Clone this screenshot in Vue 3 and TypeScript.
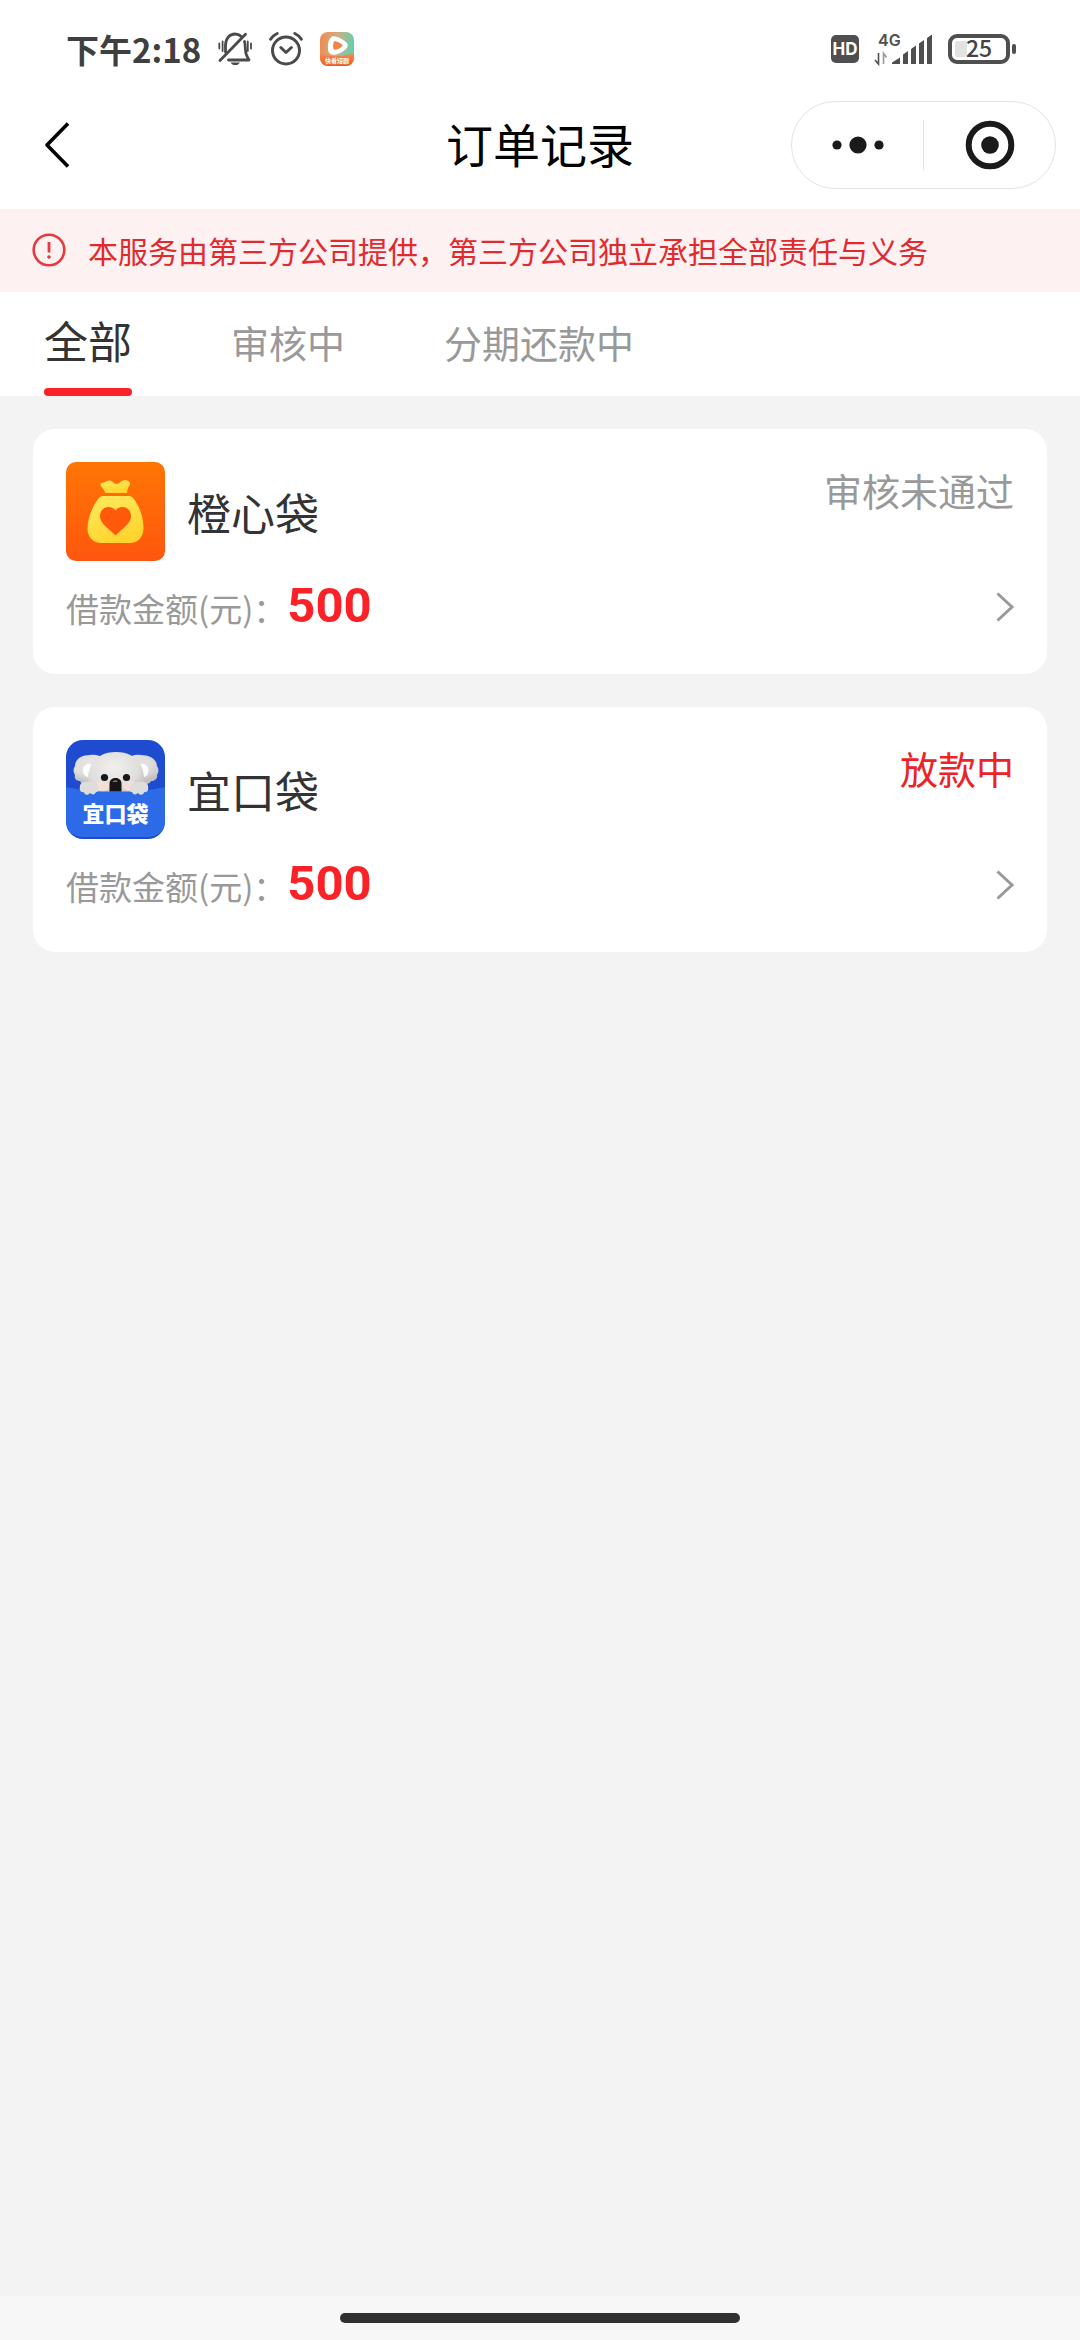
<script setup lang="ts">
import { ref } from 'vue'

interface Order {
  id: number
  name: string
  logo: 'bag' | 'koala'
  amount: number
  status: string
  active: boolean
}

const tabs: string[] = ['全部', '审核中', '分期还款中']
const current = ref<number>(0)

const orders: Order[] = [
  { id: 1, name: '橙心袋', logo: 'bag', amount: 500, status: '审核未通过', active: false },
  { id: 2, name: '宜口袋', logo: 'koala', amount: 500, status: '放款中', active: true },
]
</script>

<template>
  <div class="page">
    <div class="status-bar">
      <div class="status-group">
        <span class="clock">下午2:18</span>
        <svg class="bell" width="34" height="34" viewBox="0 0 34 34" fill="none" stroke="#4a4a4a" stroke-width="2.8" stroke-linecap="round">
          <path d="M7.5 20V13.5C7.5 6.5 11.5 2 17 2c2.600 0 4.600 .9 6 2.300" />
          <path d="M26.500 9.500C27.500 12 27 18 28 21.500c.6 2.600 2 4.500 3 6.500H10.500" stroke-linejoin="round" />
          <path d="M2 28.500 27.500 2.200" />
          <path d="M1.300 11.500v5M4.600 9.500v9.500M29.800 9.500v9.500M33 11.500v5" stroke-width="1.800" />
          <path d="M12.500 30.500h9.500c-1 1.700-2.600 2.600-4.700 2.600s-3.800-.9-4.800-2.600z" fill="#4a4a4a" stroke="none" />
        </svg>
        <svg class="alarm" width="34" height="34" viewBox="0 0 34 34" fill="none" stroke="#4a4a4a" stroke-width="3" stroke-linecap="round" stroke-linejoin="round">
          <circle cx="17" cy="18.500" r="13.500" />
          <path d="M11.800 15.500 17 20.500l5.400-5" />
          <path d="M1.600 7.200C3.200 4.600 5.400 2.800 8.200 1.500M25.800 1.500c2.800 1.300 5 3.100 6.600 5.700" />
        </svg>
        <svg class="player" width="34" height="34" viewBox="0 0 34 34">
          <defs>
            <linearGradient id="playerSky" x1="0" y1="0.2" x2="1" y2="0.4">
              <stop offset="0" stop-color="#f28a4e" />
              <stop offset="0.500" stop-color="#c9b184" />
              <stop offset="1" stop-color="#62cfae" />
            </linearGradient>
            <linearGradient id="playerGround" x1="0" y1="0" x2="0" y2="1">
              <stop offset="0" stop-color="#f5925a" />
              <stop offset="1" stop-color="#ef5a28" />
            </linearGradient>
            <clipPath id="playerClip"><rect width="34" height="34" rx="8" /></clipPath>
          </defs>
          <g clip-path="url(#playerClip)">
            <rect width="34" height="34" fill="url(#playerSky)" />
            <path d="M0 20c7 5 18 6 34 1v13H0z" fill="url(#playerGround)" />
            <path d="M12 4.500c3-1.500 12 3 15 6.500 1.500 2 .5 4.500-1 6-3 3-9 6-13 5.800-3-.2-4.500-2-5-5C7.400 13 8.500 6.500 12 4.500z" fill="#fff" />
            <path d="M14.500 9.300c1.500-.5 7 2.200 7.800 3.400.5.9 0 1.700-.8 2.300-1.800 1.400-5 3-6.600 2.800-1.200-.2-1.600-1.200-1.700-2.400-.1-1.800 0-5.600 1.300-6.100z" fill="#ef8549" />
            <text x="17" y="31" text-anchor="middle" font-size="6" font-weight="700" fill="#fff">快看短剧</text>
          </g>
        </svg>
      </div>
      <div class="status-group">
        <svg width="28" height="28" viewBox="0 0 28 28">
          <rect width="28" height="28" rx="5" fill="#4f4f4f" />
          <text class="latin" x="14" y="20" text-anchor="middle" font-size="17" font-weight="700" fill="#fff">HD</text>
        </svg>
        <svg class="signal" width="57" height="32" viewBox="0 0 57 32" fill="#4f4f4f">
          <text class="latin" x="3" y="13" font-size="16" font-weight="600">4G</text>
          <path d="M17 31v-1.500l8-5V31zM28 31v-9.500l5-3.500v13zM36 31V16l5-3.500V31zM44 31V10.500L49 7v24zM52 31V5l5-3.500V31z" />
          <path d="M3.500 20v11L0 27" fill="none" stroke="#4f4f4f" stroke-width="1.600" />
          <path d="M8.500 31V20.500l3 4" fill="none" stroke="#999" stroke-width="1.600" />
        </svg>
        <svg class="battery" width="68" height="30" viewBox="0 0 68 30">
          <rect x="2" y="2" width="58" height="26" rx="7" fill="none" stroke="#4f4f4f" stroke-width="4" />
          <rect x="7" y="7" width="12" height="16" rx="2" fill="#e2e2e2" />
          <rect x="64" y="10" width="4" height="10" rx="2" fill="#4f4f4f" />
          <text x="31" y="23" text-anchor="middle" font-size="23" font-weight="500" fill="#444">25</text>
        </svg>
      </div>
    </div>

    <header class="nav">
      <button class="back" type="button" aria-label="返回">
        <svg width="26" height="46" viewBox="0 0 26 46" fill="none" stroke="#000" stroke-width="3.600" stroke-linejoin="round">
          <path d="M24 1.500 3 23l21 21.500" />
        </svg>
      </button>
      <h1 class="title">订单记录</h1>
      <div class="capsule">
        <button type="button" aria-label="更多">
          <svg width="52" height="18" viewBox="0 0 52 18" fill="#1a1a1a">
            <circle cx="5" cy="9" r="4.600" />
            <circle cx="26" cy="9" r="8.600" />
            <circle cx="47" cy="9" r="4.600" />
          </svg>
        </button>
        <span class="divider"></span>
        <button type="button" aria-label="关闭">
          <svg width="50" height="50" viewBox="0 0 50 50">
            <circle cx="25" cy="25" r="21.300" fill="none" stroke="#1a1a1a" stroke-width="6" />
            <circle cx="25" cy="25" r="8.800" fill="#1a1a1a" />
          </svg>
        </button>
      </div>
    </header>

    <p class="notice">
      <svg width="34" height="34" viewBox="0 0 34 34" fill="none" stroke="#e23a3e" stroke-width="2.600">
        <circle cx="17" cy="17" r="15.300" />
        <path d="M17 9v10.500" stroke-width="2.800" />
        <circle cx="17" cy="24" r="1.800" fill="#e23a3e" stroke="none" />
      </svg>
      <span>本服务由第三方公司提供，第三方公司独立承担全部责任与义务</span>
    </p>

    <nav class="tabs">
      <button
        v-for="(tab, i) in tabs"
        :key="tab"
        type="button"
        class="tab"
        :class="{ selected: i === current }"
        @click="current = i"
      >{{ tab }}</button>
    </nav>

    <main class="list">
      <article v-for="order in orders" :key="order.id" class="card">
        <div class="card-top">
          <svg v-if="order.logo === 'bag'" class="logo" width="99" height="99" viewBox="0 0 99 99">
            <defs>
              <linearGradient id="bagBack" x1="0" y1="0" x2="0" y2="1">
                <stop offset="0" stop-color="#ff7604" />
                <stop offset="1" stop-color="#ff560f" />
              </linearGradient>
              <linearGradient id="bagBody" x1="0.200" y1="0" x2="0.600" y2="1">
                <stop offset="0" stop-color="#ffe95c" />
                <stop offset="1" stop-color="#ffd32c" />
              </linearGradient>
            </defs>
            <rect width="99" height="99" rx="10" fill="url(#bagBack)" />
            <path d="M39.500 31 37 26.500c-1.500-2-3-3-2.500-4.500.5-1.200 2-.8 3.500-1.500 2-.8 3.500-2.500 6-2 2.500.6 3.500 3.500 6.500 3.500s4-3 7-3.500c3-.6 6 0 6.500 2.500.4 2-1.500 3.500-2.200 5.500L61 31z" fill="url(#bagBody)" />
            <path d="M37 34h26c2 0 3.500 1 4.500 2.500C73 44 77.500 54 77.500 66c0 9-5.500 15-14 15h-28c-8.500 0-14-6-14-14 0-12 5.500-23 11-30.500C33.500 35 35 34 37 34z" fill="url(#bagBody)" />
            <path d="M49.500 73.500C42 66 34 61.500 34 54c0-5 3.500-9 8.500-9 3 0 5.500 1.500 7 3.500 1.500-2 4-3.500 7-3.500 5 0 8.500 4 8.500 9 0 7.500-8 12-15.500 19.500z" fill="#ff5a0c" />
          </svg>
          <svg v-else class="logo" width="99" height="99" viewBox="0 0 99 99">
            <defs>
              <clipPath id="koalaClip"><rect width="99" height="99" rx="17" /></clipPath>
              <radialGradient id="koalaFur" cx="0.450" cy="0.350" r="0.650">
                <stop offset="0" stop-color="#f1f0ee" />
                <stop offset="0.700" stop-color="#dfdedc" />
                <stop offset="1" stop-color="#c3c2c2" />
              </radialGradient>
            </defs>
            <g clip-path="url(#koalaClip)">
              <rect width="99" height="99" fill="#1f4bd0" />
              <path d="M24 15c5-1 9 0 12 3L24 43c-5 2-9 1-10-2-4 0-6-3-5-6-2-3-2-6 0-9 0-7 7-11 15-11zM75 15c-5-1-9 0-12 3l12 25c5 2 9 1 10-2 4 0 7-3 6-6 2-3 2-6 0-9 0-7-8-11-16-11z" fill="url(#koalaFur)" />
              <path d="M17 28c1-3 5-5 9-4l-4 13c-4-1-6-5-5-9zM82 28c-1-3-4-5-8-4l4 13c4-1 5-5 4-9z" fill="#fdfdfd" />
              <path d="M50 12c18 0 28 11 28 27 0 10-8 17-28 17S22 49 22 39c0-16 10-27 28-27z" fill="url(#koalaFur)" />
              <ellipse cx="36" cy="46" rx="7" ry="5" fill="#f3dfd6" />
              <ellipse cx="64" cy="46" rx="7" ry="5" fill="#f3dfd6" />
              <path d="M0 47q14 3 34 4.500h31q20-1.500 34-4.500v33c0 12-6 16-17 17H17C6 96 0 92 0 80z" fill="#2d6ae8" />
              <path d="M14 46c0-4 5-5 9-4 6 0 9 2 9 5 1 3 0 5-2 5-1 3-4 3-6 1-2 3-6 2-6-1-3 1-5-2-4-6zM82 46c0-4-5-5-9-4-6 0-9 2-9 5-1 3 0 5 2 5 1 3 4 3 6 1 2 3 6 2 6-1 3 1 5-2 4-6z" fill="#dedddb" />
              <circle cx="38.500" cy="37.500" r="3.600" fill="#171717" />
              <circle cx="60.500" cy="37.500" r="3.600" fill="#171717" />
              <path d="M49.500 38c4 0 6 2.500 6 6v7.500h-12V44c0-3.500 2-6 6-6z" fill="#151515" />
              <path d="M47 42q3-2 4 0" stroke="#777" stroke-width="1.500" fill="none" />
              <text x="49.500" y="82" text-anchor="middle" font-size="22" font-weight="900" fill="#fff">宜口袋</text>
            </g>
          </svg>
          <h2 class="name">{{ order.name }}</h2>
          <span class="state" :class="{ active: order.active }">{{ order.status }}</span>
        </div>
        <div class="card-bottom">
          <p class="amount">借款金额(元)：<strong>{{ order.amount }}</strong></p>
          <button class="more" type="button" :aria-label="order.name + '详情'">
            <svg width="18" height="30" viewBox="0 0 18 30" fill="none" stroke="#999" stroke-width="3">
              <path d="M1.500 1.500 16 15 1.500 28.500" />
            </svg>
          </button>
        </div>
      </article>
    </main>

    <div class="home"><span class="home-bar"></span></div>
  </div>
</template>

<style>
body {
  margin: 0;
}
</style>

<style scoped>
.page {
  display: flex;
  flex-direction: column;
  min-height: 100vh;
  background: #f3f3f3;
  color: #333;
  font-family: "Noto Sans CJK SC", sans-serif;
}

svg {
  display: block;
  flex: none;
  overflow: visible;
}

.latin {
  font-family: Inter, sans-serif;
}

button {
  margin: 0;
  padding: 0;
  border: 0;
  background: none;
  color: inherit;
  font: inherit;
}

h1,
h2,
p {
  margin: 0;
  font-weight: 400;
}

.status-bar {
  display: flex;
  justify-content: space-between;
  box-sizing: border-box;
  height: 80px;
  padding: 18px 64px 0 66px;
  background: #fff;
}

.status-group {
  display: flex;
  align-items: center;
}

.clock {
  color: #3f3f3f;
  font-size: 33px;
  font-weight: 700;
  line-height: 48px;
}

.bell,
.alarm,
.player {
  margin-left: 17px;
}

.signal,
.battery {
  margin-left: 16px;
}

.nav {
  display: grid;
  grid-template-columns: 1fr auto 1fr;
  align-items: center;
  height: 129px;
  padding: 0 24px;
  background: #fff;
}

.back {
  justify-self: start;
  padding-left: 20px;
}

.title {
  padding-bottom: 4px;
  color: #000;
  font-size: 47px;
  line-height: 64px;
}

.capsule {
  display: flex;
  align-items: center;
  justify-self: end;
  box-sizing: border-box;
  width: 265px;
  height: 88px;
  border: 1px solid #e3e3e3;
  border-radius: 44px;
}

.capsule button {
  display: flex;
  flex: 1;
  justify-content: center;
}

.divider {
  width: 1px;
  height: 50px;
  background: #e3e3e3;
}

.notice {
  display: flex;
  align-items: center;
  gap: 22px;
  box-sizing: border-box;
  height: 83px;
  padding: 0 32px 2px;
  background: #fef1f1;
  color: #e02a2e;
  font-size: 30px;
  line-height: 44px;
}

.tabs {
  display: flex;
  gap: 99px;
  height: 104px;
  padding: 0 44px;
  background: #fff;
}

.tab {
  box-sizing: border-box;
  padding-bottom: 4px;
  color: #999;
  font-size: 38px;
  line-height: 56px;
}

.tab.selected {
  position: relative;
  padding-bottom: 8px;
  color: #333;
  font-size: 44px;
}

.tab.selected::after {
  position: absolute;
  right: 0;
  bottom: 0;
  left: 0;
  height: 8px;
  border-radius: 4px;
  background: #fa2226;
  content: "";
}

.list {
  display: flex;
  flex: 1;
  flex-direction: column;
  gap: 33px;
  padding: 33px;
}

.card {
  box-sizing: border-box;
  height: 245px;
  padding: 33px;
  border-radius: 22px;
  background: #fff;
}

.card-top {
  display: flex;
  align-items: center;
}

.name {
  flex: 1;
  margin-left: 22px;
  font-size: 44px;
  line-height: 64px;
}

.state {
  align-self: flex-start;
  color: #999;
  font-size: 38px;
  line-height: 56px;
}

.state.active {
  color: #ee2226;
}

.card-bottom {
  display: flex;
  align-items: center;
  justify-content: space-between;
  height: 92px;
}

.amount {
  color: #999;
  font-size: 33px;
  line-height: 64px;
}

.amount strong {
  margin-left: 1px;
  color: #fa2226;
  font-family: Roboto, sans-serif;
  font-size: 49px;
  font-weight: 700;
}

.home {
  display: flex;
  align-items: center;
  justify-content: center;
  height: 44px;
  background: #f7f7f7;
}

.home-bar {
  width: 37%;
  height: 10px;
  border-radius: 5px;
  background: #303030;
}
</style>
